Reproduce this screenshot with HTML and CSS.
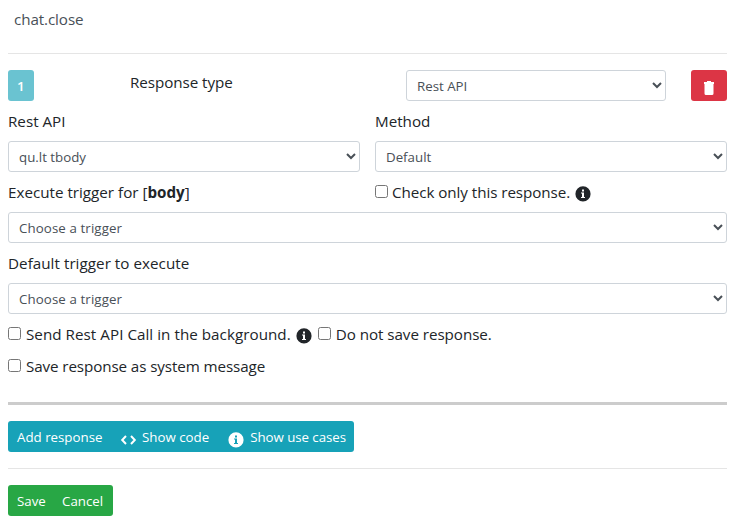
FILE: index.html
```
<!DOCTYPE html>
<html lang="en">
<head>
<meta charset="utf-8">
<title>chat.close</title>
<link rel="stylesheet" href="styles.css">
</head>
<body>
<svg class="defs" width="0" height="0">
  <symbol id="info" viewBox="0 0 16 16"><path fill-rule="evenodd" d="M8 .3a7.6 7.6 0 1 0 0 15.2A7.6 7.6 0 0 0 8 .3zM7 3.5h2v2H7zM6 6.5h3V11h1v1H6v-1h1V7.5H6z"/></symbol>
</svg>
<main class="page">
  <div class="title"><span class="t-title">chat.close</span></div>
  <hr>
  <div class="head">
    <button class="btn number">1</button>
    <div class="head-label"><span class="t-type">Response type</span></div>
    <select class="control head-select"><option>Rest API</option></select>
    <button class="btn danger" aria-label="Delete"><svg width="12" height="15" viewBox="0 0 12 15"><path d="M4 0h4v1h3v2H1V1h3zM1.5 3h9v9.5a1.5 1.5 0 0 1-1.5 1.5H3a1.5 1.5 0 0 1-1.5-1.5z"/></svg></button>
  </div>
  <div class="columns">
    <div class="field"><label class="label"><span class="t-rest">Rest API</span></label><select class="control"><option>qu.lt tbody</option></select></div>
    <div class="field"><label class="label"><span class="t-method">Method</span></label><select class="control"><option>Default</option></select></div>
  </div>
  <div class="columns labels">
    <label class="label"><span class="t-exec">Execute trigger for [<b>body</b>]</span></label>
    <label class="label check"><input type="checkbox"><span class="t-check">Check only this response.</span><svg class="info"><use href="#info"/></svg></label>
  </div>
  <select class="control trigger"><option>Choose a trigger</option></select>
  <label class="label spaced"><span class="t-default">Default trigger to execute</span></label>
  <select class="control trigger"><option>Choose a trigger</option></select>
  <div class="checks">
    <label class="check"><input type="checkbox"><span class="t-send">Send Rest API Call in the background.</span><svg class="info"><use href="#info"/></svg></label>
    <label class="check"><input type="checkbox"><span class="t-nosave">Do not save response.</span></label>
  </div>
  <div class="checks second">
    <label class="check"><input type="checkbox"><span class="t-system">Save response as system message</span></label>
  </div>
  <hr class="thick">
  <div class="group teal">
    <button class="btn b-add"><span>Add response</span></button>
    <button class="btn b-code"><svg class="code" viewBox="0 0 16 12"><path d="M5.5 2 1.7 6l3.8 4M10.5 2l3.8 4-3.8 4"/></svg><span>Show code</span></button>
    <button class="btn b-cases"><svg class="info"><use href="#info"/></svg><span>Show use cases</span></button>
  </div>
  <hr>
  <div class="group green">
    <button class="btn b-save"><span>Save</span></button>
    <button class="btn b-cancel"><span>Cancel</span></button>
  </div>
</main>
</body>
</html>
```
FILE: styles.css
```
* { box-sizing: border-box; }
body {
  margin: 0;
  background: #fff;
  color: #212529;
  font: 15.2px/24px "Open Sans", "Noto Sans", sans-serif;
}
.defs { position: absolute; }
.page { width: 719px; margin-left: 8px; padding-top: 7px; }
span { white-space: nowrap; }
.title { height: 30px; padding-left: 6px; color: #495057; }
.t-title { letter-spacing: -.1px; }
hr { height: 1px; margin: 16px 0; border: 0; background: #e5e5e5; }
.head { display: flex; height: 31px; }
.head-label { flex: 1; padding: 0 0 0 96px; }
.t-type { letter-spacing: -.06px; }
.btn {
  display: flex;
  align-items: center;
  height: 31px;
  padding: 0 9px;
  border: 0;
  border-radius: 3px;
  color: #fff;
  background: none;
  font: 13.3px/21px "Open Sans", "Noto Sans", sans-serif;
  white-space: nowrap;
}
.number { width: 26px; padding-top: 1px; background: #6ac3d1; font-weight: 600; }
.danger { width: 36px; margin-left: 25px; padding: 5px 0 0; justify-content: center; background: #dc3545; }
.danger svg { fill: #fff; }
.control {
  display: block;
  width: 100%;
  height: 31px;
  padding: 4px 6px;
  border: 1px solid #ced4da;
  border-radius: 3px;
  background: #fff;
  color: #495057;
  font: 13.3px/21px "Open Sans", "Noto Sans", sans-serif;
}
.trigger { letter-spacing: .1px; }
.head-select { width: 260px; }
.columns { display: grid; grid-template-columns: 352px 352px; gap: 15px; margin-top: 8px; }
.label { display: block; height: 24px; margin-bottom: 8px; }
.t-default { letter-spacing: .04px; }
.t-check { letter-spacing: -.06px; }
.t-send { letter-spacing: .04px; }
.t-nosave { letter-spacing: -.05px; }
.t-system { letter-spacing: -.1px; }
.label.spaced { margin-top: 8px; }
.check { display: flex; }
.check input { width: 13px; height: 13px; margin: 5px 5px 0 0; flex: none; }
.label.check input { margin-right: 4px; }
.info { width: 16px; height: 16px; margin: 6px 0 0 5px; fill: currentColor; flex: none; }
.checks { display: flex; gap: 6px; height: 24px; margin-top: 8px; }
.thick { height: 3px; margin: 24px 0 16px; background: #ccc; }
.group { display: flex; width: max-content; height: 31px; border-radius: 3px; }
.group .btn { padding-top: 2px; }
.teal { width: 346px; background: #17a2b8; }
.green { width: 105px; background: #28a745; }
.b-add { width: 103px; }
.b-code { width: 108px; }
.code { width: 17px; height: 12px; margin: 4px 5px 0 0; fill: none; stroke: #fff; stroke-width: 2; }
.b-cases .info { margin: 4px 6px 0 1px; }
.b-cases { letter-spacing: -.05px; }
.b-save { width: 46px; }
.b-cancel { padding-left: 8px; }
```
